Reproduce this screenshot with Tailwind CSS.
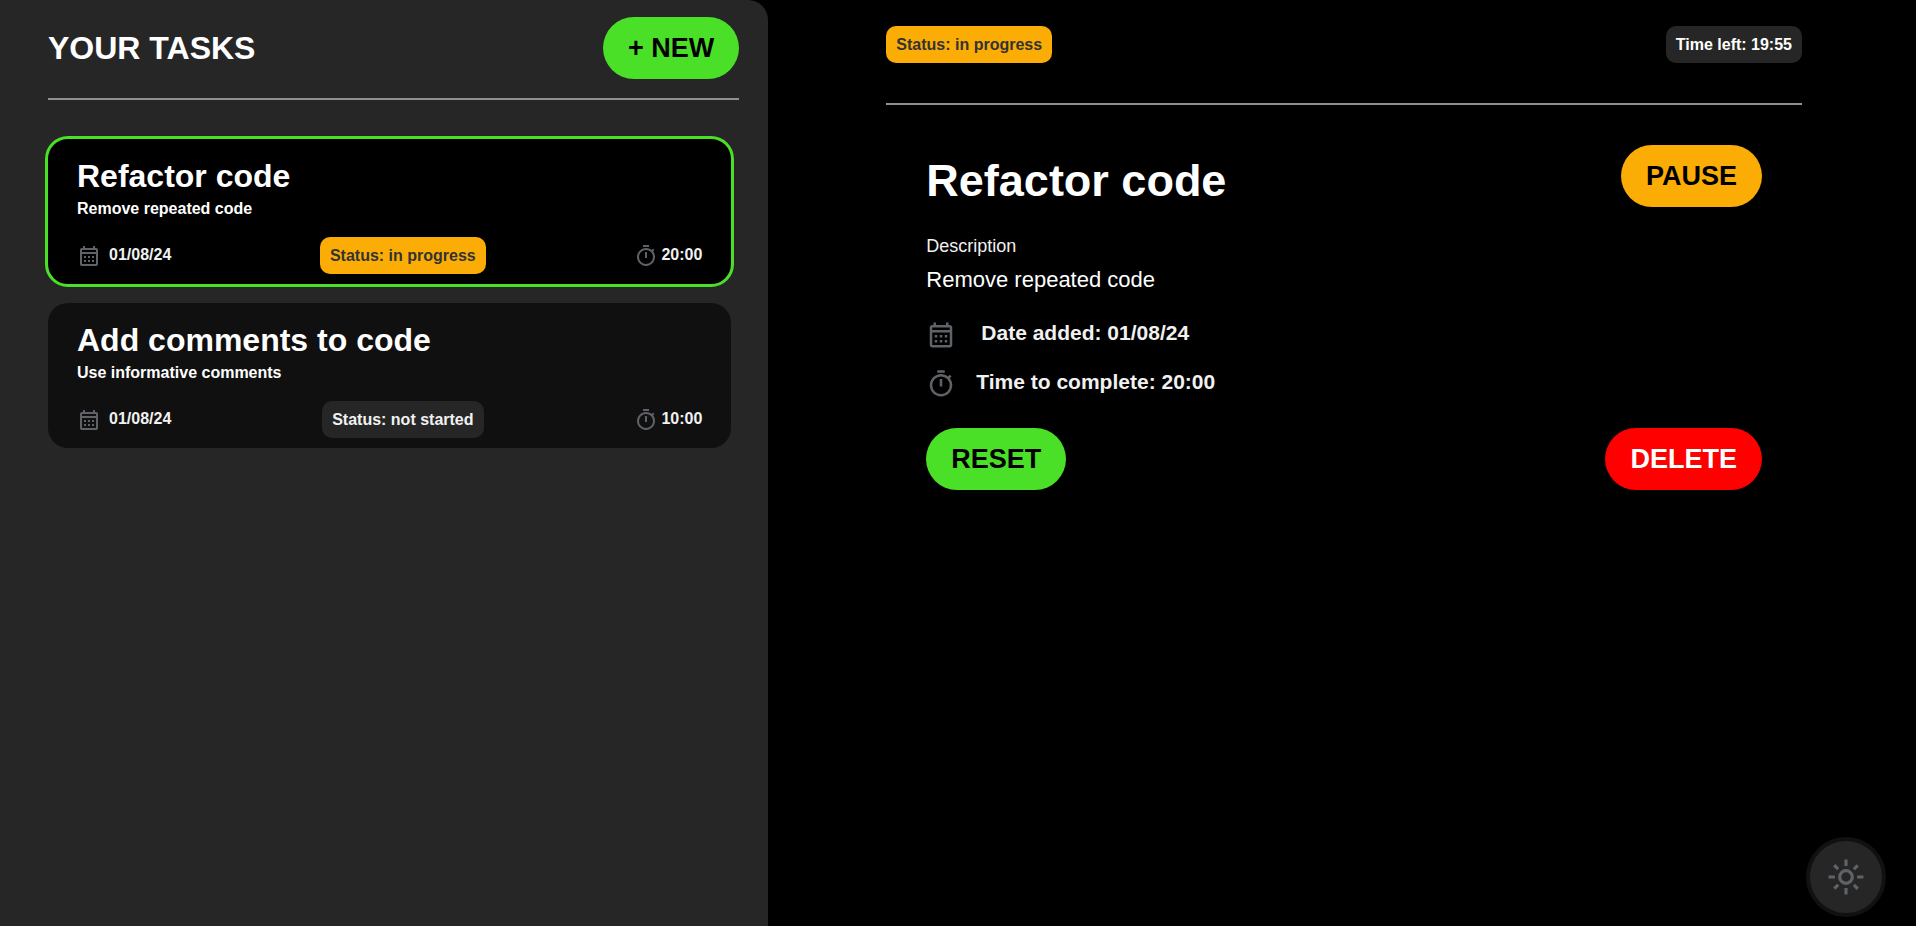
<!DOCTYPE html>
<html lang="en">
<head>
<meta charset="utf-8">
<meta name="viewport" content="width=device-width, initial-scale=1">
<title>Your tasks</title>
<script src="https://cdn.jsdelivr.net/npm/@tailwindcss/browser@4"></script>
</head>
<body class="flex min-h-screen bg-black font-['Liberation_Sans',Arial,sans-serif] text-white">

<svg class="hidden" aria-hidden="true">
  <symbol id="calendar" viewBox="0 -960 960 960">
    <path d="M200-80q-33 0-56.500-23.500T120-160v-560q0-33 23.500-56.500T200-800h40v-80h80v80h320v-80h80v80h40q33 0 56.500 23.500T840-720v560q0 33-23.500 56.500T760-80H200Zm0-80h560v-400H200v400Zm0-480h560v-80H200v80Z"/>
    <path d="M280-480h80v80h-80ZM440-480h80v80h-80ZM600-480h80v80h-80ZM280-320h80v80h-80ZM440-320h80v80h-80ZM600-320h80v80h-80Z"/>
  </symbol>
  <symbol id="timer" viewBox="0 -960 960 960">
    <path d="M360-840v-80h240v80H360Zm80 440h80v-240h-80v240Zm40 320q-74 0-139.500-28.500T226-186q-49-49-77.500-114.500T120-440q0-74 28.500-139.500T226-694q49-49 114.500-77.500T480-800q62 0 119 20t107 58l56-56 56 56-56 56q38 50 58 107t20 119q0 74-28.500 139.500T734-186q-49 49-114.500 77.500T480-80Zm0-80q116 0 198-82t82-198q0-116-82-198t-198-82q-116 0-198 82t-82 198q0 116 82 198t198 82Z"/>
  </symbol>
  <symbol id="sun" viewBox="0 -960 960 960">
    <path d="M480-360q50 0 85-35t35-85q0-50-35-85t-85-35q-50 0-85 35t-35 85q0 50 35 85t85 35Zm0 80q-83 0-141.500-58.500T280-480q0-83 58.500-141.500T480-680q83 0 141.500 58.500T680-480q0 83-58.500 141.500T480-280ZM200-440H40v-80h160v80Zm720 0H760v-80h160v80ZM440-760v-160h80v160h-80Zm0 720v-160h80v160h-80ZM256-650l-101-97 57-59 96 100-52 56Zm492 496-97-101 53-55 101 97-57 59Zm-98-550 97-101 59 57-100 96-56-52ZM154-212l101-97 55 53-97 101-59-57Z"/>
  </symbol>
</svg>

<aside class="w-[40.1%] shrink-0 rounded-tr-[20px] bg-[#262626] pt-[17px] pr-[29px] pl-12">
  <header class="flex items-center justify-between border-b-2 border-[#909090] pb-[19px]">
    <h1 class="text-[32px] leading-9 font-bold">YOUR TASKS</h1>
    <button type="button" class="rounded-[31px] bg-[#4be028] px-[25px] py-[15px] text-[27px] leading-8 font-bold text-black">+ NEW</button>
  </header>

  <ul class="mt-[39px] mr-2 flex flex-col gap-[19px]">
    <li class="rounded-[20px] bg-black px-[29px] pt-[19px] pb-[10px] outline-3 outline-[#4be028]">
      <h2 class="text-[32px] leading-9 font-bold">Refactor code</h2>
      <p class="mt-[5px] text-base leading-5 font-bold">Remove repeated code</p>
      <div class="mt-[18px] flex items-center justify-between text-base leading-[22px] font-bold text-[#f1f1f1]">
        <div class="flex gap-2"><svg class="size-6 fill-[#5f6368]" aria-hidden="true"><use href="#calendar"/></svg><span>01/08/24</span></div>
        <div class="rounded-[10px] bg-[#fcad05] px-[10px] py-[9px] leading-[19px] text-[#333333]">Status: in progress</div>
        <div class="flex gap-[3px]"><svg class="size-6 fill-[#5f6368]" aria-hidden="true"><use href="#timer"/></svg><span>20:00</span></div>
      </div>
    </li>
    <li class="rounded-[20px] bg-[#101010] px-[29px] pt-[19px] pb-[10px]">
      <h2 class="text-[32px] leading-9 font-bold">Add comments to code</h2>
      <p class="mt-[5px] text-base leading-5 font-bold">Use informative comments</p>
      <div class="mt-[18px] flex items-center justify-between text-base leading-[22px] font-bold text-[#f1f1f1]">
        <div class="flex gap-2"><svg class="size-6 fill-[#5f6368]" aria-hidden="true"><use href="#calendar"/></svg><span>01/08/24</span></div>
        <div class="rounded-[10px] bg-[#262626] px-[10px] py-[9px] leading-[19px]">Status: not started</div>
        <div class="flex gap-[3px]"><svg class="size-6 fill-[#5f6368]" aria-hidden="true"><use href="#timer"/></svg><span>10:00</span></div>
      </div>
    </li>
  </ul>
</aside>

<main class="grow pt-[26px] pr-[114px] pl-[118px]">
  <header class="flex items-center justify-between border-b-2 border-[#909090] pb-10 text-base font-bold">
    <div class="rounded-[10px] bg-[#fcad05] px-[10px] py-[9px] leading-[19px] text-[#333333]">Status: in progress</div>
    <div class="rounded-[10px] bg-[#262626] px-[10px] py-[9px] leading-[19px]">Time left: 19:55</div>
  </header>

  <section class="px-10 pt-10">
    <div class="flex items-start justify-between">
      <h2 class="pt-[10px] text-[45px] leading-[52px] font-bold">Refactor code</h2>
      <button type="button" class="rounded-[31px] bg-[#fcad05] px-[25px] py-[15px] text-[27px] leading-8 font-bold text-black">PAUSE</button>
    </div>
    <h3 class="mt-[28px] text-[18px] leading-[22px] text-[#f1f1f1]">Description</h3>
    <p class="mt-[10px] text-[22px] leading-[26px]">Remove repeated code</p>
    <div class="mt-[27px] flex flex-col gap-[19px] text-[21px] leading-[26px] font-bold text-[#f1f1f1]">
      <div class="flex gap-[25px]"><svg class="size-[30px] fill-[#5f6368]" aria-hidden="true"><use href="#calendar"/></svg><p>Date added: 01/08/24</p></div>
      <div class="flex gap-5"><svg class="size-[30px] fill-[#5f6368]" aria-hidden="true"><use href="#timer"/></svg><p>Time to complete: 20:00</p></div>
    </div>
    <div class="mt-[29px] flex justify-between">
      <button type="button" class="rounded-[31px] bg-[#4be028] px-[25px] py-[15px] text-[27px] leading-8 font-bold text-black">RESET</button>
      <button type="button" class="rounded-[31px] bg-[#ff0000] px-[25px] py-[15px] text-[27px] leading-8 font-bold text-white">DELETE</button>
    </div>
  </section>
</main>

<button type="button" aria-label="Switch theme" class="fixed right-[30px] bottom-[9px] flex size-20 items-center justify-center rounded-full border-4 border-[#111111] bg-[#262626]">
  <svg class="size-[38px] fill-[#5f6368]" aria-hidden="true"><use href="#sun"/></svg>
</button>

</body>
</html>
